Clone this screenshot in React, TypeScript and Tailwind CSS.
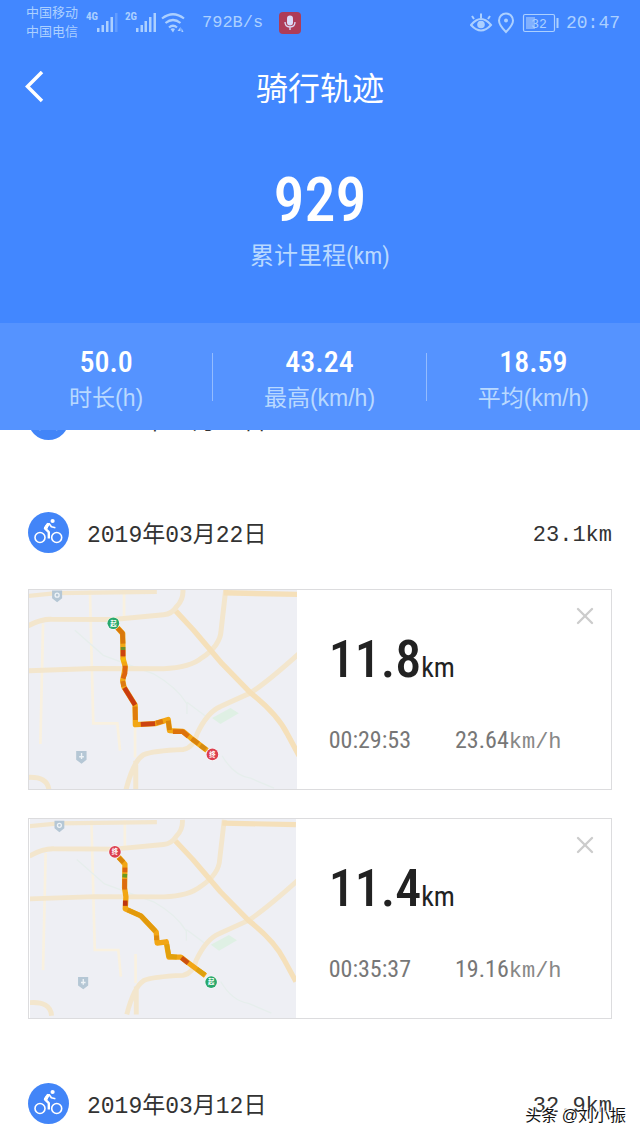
import { FiX } from "react-icons/fi"

type Point = [number, number]
type Segment = { color: string; points: Point[] }
type Ride = {
  distance: string
  time: string
  speed: string
  start: Point
  end: Point
  track: Point[]
  segments: Segment[]
  inset?: boolean
}
type Day = { date: string; total: string; rides: Ride[] }

const condensed = "font-['Roboto_Condensed','Noto_Sans_CJK_SC',sans-serif]"

const stats = [
  { value: "50.0", label: "时长(h)" },
  { value: "43.24", label: "最高(km/h)" },
  { value: "18.59", label: "平均(km/h)" },
]

const days: Day[] = [
  { date: "2019年03月23日", total: "12.5km", rides: [] },
  {
    date: "2019年03月22日",
    total: "23.1km",
    rides: [
      {
        distance: "11.8",
        time: "00:29:53",
        speed: "23.64",
        start: [280, 129],
        end: [576, 521],
        track: [[292, 142], [308, 160], [309, 235], [316, 260], [308, 300], [312, 320], [345, 373], [346, 432], [405, 429], [444, 417], [448, 450], [488, 452], [512, 472], [560, 509]],
        segments: [
          { color: "#d9780c", points: [[292, 143], [307, 158], [309, 190]] },
          { color: "#6f8f2a", points: [[309, 200], [309, 209]] },
          { color: "#cc4410", points: [[309, 209], [309, 228]] },
          { color: "#f5b90c", points: [[309, 232], [311, 244]] },
          { color: "#dc6410", points: [[315, 256], [315, 278], [309, 294]] },
          { color: "#dd7a10", points: [[308, 302], [311, 318]] },
          { color: "#c93c10", points: [[313, 322], [345, 373]] },
          { color: "#e07c0c", points: [[345, 378], [346, 418]] },
          { color: "#cc4410", points: [[362, 431], [405, 429]] },
          { color: "#de780c", points: [[408, 427], [428, 422]] },
          { color: "#d9860c", points: [[444, 420], [448, 448]] },
          { color: "#dd720c", points: [[458, 453], [487, 453], [504, 467]] },
          { color: "#d9820c", points: [[514, 474], [534, 489]] },
          { color: "#d58a12", points: [[540, 494], [556, 506]] },
        ],
      },
      {
        distance: "11.4",
        time: "00:35:37",
        speed: "19.16",
        start: [573, 518],
        end: [284, 127],
        inset: true,
        track: [[295, 142], [314, 164], [313, 235], [317, 262], [315, 298], [362, 319], [408, 368], [411, 401], [438, 397], [446, 443], [482, 443], [508, 463], [556, 499]],
        segments: [
          { color: "#d8860c", points: [[295, 144], [310, 158]] },
          { color: "#dc6410", points: [[314, 174], [314, 188]] },
          { color: "#6a9a20", points: [[314, 193], [313, 204]] },
          { color: "#dc6a10", points: [[313, 208], [313, 240]] },
          { color: "#bd3410", points: [[315, 273], [315, 289]] },
          { color: "#e29a0c", points: [[322, 301], [362, 319], [406, 365]] },
          { color: "#dd8a0c", points: [[409, 378], [409, 392]] },
          { color: "#e2a00c", points: [[440, 405], [446, 440], [470, 443]] },
          { color: "#cc500f", points: [[484, 445], [504, 461]] },
          { color: "#dda00f", points: [[530, 479], [554, 496]] },
        ],
      },
    ],
  },
  { date: "2019年03月12日", total: "32.9km", rides: [] },
]

function line(points: Point[]) {
  return points.map((p) => p.join(",")).join(" ")
}

function CyclistIcon() {
  return (
    <svg viewBox="0 0 41 41" className="size-[41px] shrink-0" fill="none" stroke="white" strokeLinejoin="round">
      <circle cx="20.5" cy="20.5" r="20.5" fill="#4285f8" stroke="none" />
      <circle cx="12" cy="25.5" r="5" strokeWidth="1.6" />
      <circle cx="28.7" cy="25.5" r="5" strokeWidth="1.6" />
      <circle cx="24.6" cy="9" r="2.1" fill="white" stroke="none" />
      <path d="M20.6 11.500 L17 16.400 L20.8 20.200 V26.6" strokeWidth="2.4" />
      <path d="M21 11.500 L23.4 14.8 L27.4 15.8" strokeWidth="1.7" />
      <path d="M19 11.500 L21.5 11.500 L18.5 17.500 L16.200 16Z" fill="white" strokeWidth="1" />
    </svg>
  )
}

function Marker({ at, color, text }: { at: Point; color: string; text: string }) {
  return (
    <g>
      <circle cx={at[0]} cy={at[1]} r="19" fill="white" opacity="0.8" />
      <circle cx={at[0]} cy={at[1]} r="17.5" fill={color} />
      <text x={at[0]} y={at[1] + 7} fontSize="19" fontWeight="bold" textAnchor="middle" fill="white" className="font-['Noto_Sans_CJK_SC',sans-serif]">
        {text}
      </text>
    </g>
  )
}

function RouteMap({ ride }: { ride: Ride }) {
  return (
    <svg
      viewBox="28 28 800 598"
      preserveAspectRatio="xMidYMid slice"
      className={`h-[199px] w-[46%] shrink-0 bg-[#eeeff4] ${ride.inset ? "border-x border-white" : ""}`}
      fill="none"
    >
      <g transform={ride.inset ? "translate(7 3) scale(0.983 0.978)" : undefined}>
        <g stroke="#f9f1e0" strokeWidth="8">
          <path d="M210 30 L220 425 M216 428 H292 L300 510 M70 130 L62 490 M345 440 V530 M312 30 V110" />
        </g>
        <g stroke="#e6eeec" strokeWidth="4">
          <path d="M165 150 L250 225 L400 280 Q470 320 500 370 L500 400 M500 365 L560 410 M605 525 Q640 585 690 592 L760 622" />
        </g>
        <path d="M575 412 L630 382 L655 398 L600 430Z" fill="#dff0e4" />
        <g stroke="#f3e6cd" strokeWidth="15" strokeLinejoin="round">
          <path d="M20 48 L110 39 L410 35" strokeWidth="13" />
          <path d="M20 140 Q60 116 95 117 L280 118 L430 104 Q455 102 470 78 Q490 58 488 28" />
          <path d="M20 271 L220 264 L430 265 Q510 262 545 232 Q600 195 602 150 L616 28" />
          <path d="M20 590 Q85 585 88 630 M347 626 V540 M318 626 Q340 540 370 522 Q395 510 490 506 Q520 500 530 460 Q560 395 600 378 L690 337 Q740 305 840 215" />
        </g>
        <g stroke="#f5e0ba" strokeWidth="16" strokeLinejoin="round">
          <path d="M610 38 L835 43" />
          <path d="M467 93 L520 150 L605 250 L690 337 Q770 400 800 460 L835 525" />
        </g>
        <g fill="#b5c7d5">
          <path d="M97 31 H127 V54 L112 66 L97 54Z M169 511 H200 V537 L185 549 L169 537Z" />
          <g stroke="#eef3f7" strokeWidth="4">
            <circle cx="112" cy="45" r="6" />
            <path d="M185 517 V535 M178 528 H192" />
          </g>
        </g>
      </g>
      <polyline points={line(ride.track)} stroke="#f2a614" strokeWidth="16" strokeLinejoin="round" />
      {ride.segments.map((s, i) => (
        <polyline key={i} points={line(s.points)} stroke={s.color} strokeWidth="14" strokeLinejoin="round" />
      ))}
      <Marker at={ride.start} color="#28a86c" text="起" />
      <Marker at={ride.end} color="#dc3f4f" text="终" />
    </svg>
  )
}

function RideCard({ ride }: { ride: Ride }) {
  return (
    <article className="flex border border-[#dcdcde] bg-white">
      <RouteMap ride={ride} />
      <div className={`flex flex-1 flex-col gap-[26px] pl-8 pt-10 ${condensed}`}>
        <div className="flex items-baseline leading-[60px] text-[#222]">
          <span className="text-[52px] font-medium">{ride.distance}</span>
          <span className="text-[28px]">km</span>
        </div>
        <div className="flex items-baseline gap-11 text-2xl leading-8 text-[#777]">
          <span>{ride.time}</span>
          <span>
            {ride.speed}
            <span className="font-['Liberation_Mono',monospace] text-[22px] text-[#888]">km/h</span>
          </span>
        </div>
      </div>
      <button type="button" aria-label="删除" className="self-start pr-3 pt-3 text-[#ccc]">
        <FiX size={28} />
      </button>
    </article>
  )
}

function StatusBar() {
  return (
    <div className="flex h-11 items-center justify-between pl-[26px] pr-5 pt-0.5 text-[#acd0ff] font-['Liberation_Mono','Noto_Sans_CJK_SC',monospace]">
      <div className="flex items-center">
        <div className="text-[13px] leading-[19px]">
          <div>中国移动</div>
          <div>中国电信</div>
        </div>
        <svg viewBox="0 0 102 24" className="ml-2 h-6 w-[102px]" fill="currentColor">
          <text x="0" y="9" fontSize="11" fontWeight="bold" className="font-['Roboto_Condensed',sans-serif]">4G</text>
          <path d="M11 17h2.5v4H11z M15.500 14h2.500v7h-2.500z M20 10h2.500v11H20z M24.500 6h2.500v15h-2.500z" />
          <path d="M29 2h2.500v19H29z" opacity=".3" />
          <text x="39" y="9" fontSize="11" fontWeight="bold" className="font-['Roboto_Condensed',sans-serif]">2G</text>
          <path d="M50 17h2.500v4H50z M54.500 14h2.500v7h-2.500z M58.500 10h2.500v11h-2.500z M63 6h2.500v15H63z M67.500 2h2.500v19h-2.500z" />
          <g fill="none" stroke="currentColor" strokeWidth="2.200">
            <path d="M76 7.500 Q87 -1 98 7.500 M79.500 12 Q87 6 94.500 12 M83 16.500 Q87 13 91 16.500" />
          </g>
          <path d="M84.500 18 Q87 16.500 89 18 L87 21.500Z M91.500 20 l3-4v4z M95.500 17l2 4h-2z" />
        </svg>
        <span className="ml-3.5 text-[17px]">792B/s</span>
        <svg viewBox="0 0 22 22" className="ml-4 size-[22px]">
          <rect width="22" height="22" rx="4" fill="#ae3c58" />
          <rect x="8" y="3.500" width="6" height="10" rx="3" fill="#dcdcf8" />
          <path d="M6 10 Q6 15 11 15 Q16 15 16 10 M11 15 V18" fill="none" stroke="#dcdcf8" strokeWidth="1.300" />
        </svg>
      </div>
      <div className="flex items-center">
        <svg viewBox="0 0 90 22" className="h-[22px] w-[90px]" fill="none" stroke="currentColor" strokeWidth="2">
          <path d="M1 13 Q11 1 21 13 Q11 24 1 13Z M11 1.500 V6 M2 4 L4 7 M20 4 L18 7" />
          <circle cx="11" cy="12.500" r="3.800" fill="currentColor" stroke="none" />
          <path d="M36 20 Q29 13 29 8.500 A7 7 0 0 1 43 8.500 Q43 13 36 20Z" />
          <circle cx="36" cy="8.500" r="2" fill="currentColor" stroke="none" />
          <rect x="53.500" y="2.500" width="31" height="17" rx="1.500" strokeWidth="1.200" />
          <path d="M87.500 6 V16" />
          <rect x="56" y="5" width="9" height="12" fill="#80b0ff" stroke="none" />
          <text x="69" y="16" fontSize="13" textAnchor="middle" fill="currentColor" stroke="none" className="font-['Liberation_Mono',monospace]">32</text>
        </svg>
        <span className="ml-1.5 text-[18px]">20:47</span>
      </div>
    </div>
  )
}

export default function App() {
  return (
    <div className="relative min-h-screen overflow-hidden bg-white">
      <header className="relative z-10 bg-[#4287ff] text-white font-['Liberation_Sans','Noto_Sans_CJK_SC',sans-serif]">
        <StatusBar />
        <div className="grid h-[86px] grid-cols-3 items-center px-5">
          <button type="button" aria-label="返回" className="justify-self-start">
            <svg viewBox="0 0 28 32" className="h-8 w-7" fill="none" stroke="currentColor" strokeWidth="3.500">
              <path d="M22 1 L7.500 15.500 L22 30" />
            </svg>
          </button>
          <h1 className="pt-1 text-center text-[32px] leading-10">骑行轨迹</h1>
        </div>
        <div className={`flex h-[193px] flex-col items-center pt-8 ${condensed}`}>
          <div className="text-[62px] font-medium leading-[76px]">929</div>
          <div className="text-2xl leading-9 text-[#b9d9ff]">累计里程(km)</div>
        </div>
        <div className="grid h-[107px] grid-cols-3 items-center divide-x divide-[#94bcff] bg-[#5593ff]">
          {stats.map((s) => (
            <div key={s.label} className="flex h-12 flex-col items-center justify-center pt-1.5">
              <div className={`text-[30px] font-medium leading-9 ${condensed}`}>{s.value}</div>
              <div className="text-[23px] leading-9 text-[#b9d9ff]">{s.label}</div>
            </div>
          ))}
        </div>
      </header>
      <main className="-mt-[67px] px-7">
        {days.map((day) => (
          <section key={day.date} className={`pt-9 last:pb-3 ${day.rides.length > 0 ? "pb-7" : "pb-9"}`}>
            <div className="flex items-center text-[#333] font-['Liberation_Mono','Noto_Sans_CJK_SC',monospace]">
              <CyclistIcon />
              <h2 className="ml-[18px] flex-1 pt-1.5 text-[23px] leading-8">{day.date}</h2>
              <span className="pt-1.5 text-[22px] leading-8">{day.total}</span>
            </div>
            {day.rides.length > 0 && (
              <div className="flex flex-col gap-7 pt-9">
                {day.rides.map((ride) => (
                  <RideCard key={ride.distance} ride={ride} />
                ))}
              </div>
            )}
          </section>
        ))}
      </main>
      <div className="absolute bottom-2.5 right-3.5 z-20 text-base leading-6 text-[#111] [text-shadow:-1px_-1px_0_#fff,1px_1px_0_#fff] font-['Liberation_Sans','Noto_Sans_CJK_SC',sans-serif]">
        头条 @刘小振
      </div>
    </div>
  )
}
